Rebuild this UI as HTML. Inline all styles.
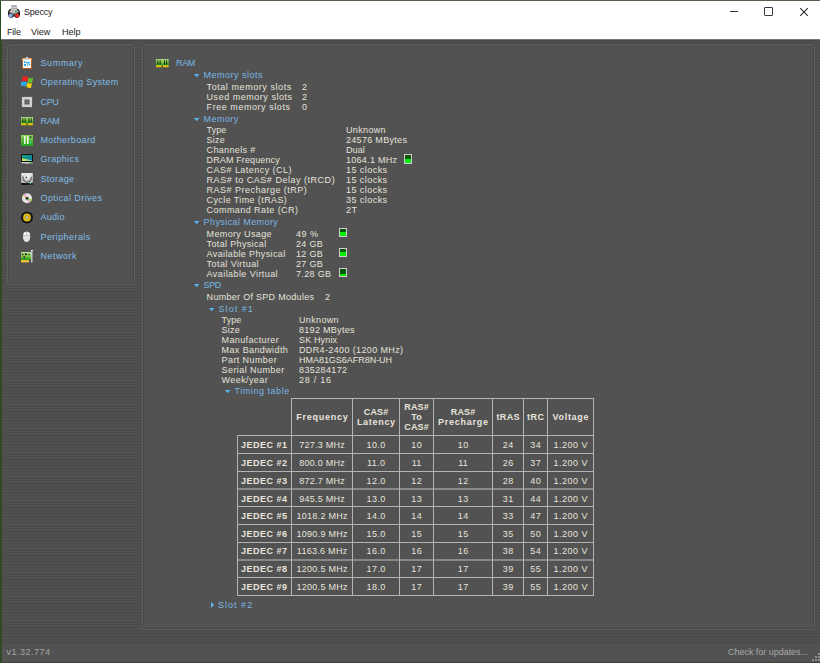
<!DOCTYPE html><html><head><meta charset="utf-8"><style>
html,body{margin:0;padding:0;}
body{width:820px;height:663px;overflow:hidden;position:relative;background:#2c4a1c;font-family:"Liberation Sans", sans-serif;font-size:9px;}
.t{position:absolute;white-space:nowrap;line-height:10px;transform-origin:0 0;}
.r{position:absolute;}
svg{position:absolute;overflow:visible;}
</style></head><body>
<div class="r" style="left:1px;top:1px;width:819px;height:661px;background:repeating-linear-gradient(to bottom,#4a4a48 0px,#4a4a48 1px,#4e4e4d 1px,#4e4e4d 2px,#525251 2px,#525251 3px);background-position:0 2px;"></div>
<div class="r" style="left:1px;top:1px;width:819px;height:38px;background:#ffffff;"></div>
<div class="r" style="left:0px;top:0px;width:820px;height:1px;background:#56604e;"></div>
<div class="r" style="left:1px;top:662px;width:819px;height:1px;background:#3c4432;"></div>
<div class="r" style="left:1px;top:39px;width:819px;height:1px;background:#747473;"></div>
<div class="r" style="left:1px;top:40px;width:819px;height:1px;background:#484846;"></div>
<div class="r" style="left:1px;top:41px;width:819px;height:3px;background:#4e4e4c;"></div>
<div class="r" style="left:1px;top:644px;width:819px;height:18px;background:#525252;"></div>
<div class="r" style="left:1px;top:40px;width:1px;height:622px;background:#3c4434;"></div>
<div class="r" style="left:818px;top:653px;width:2px;height:2px;background:#8c8c8c;"></div>
<div class="r" style="left:815px;top:656px;width:2px;height:2px;background:#8c8c8c;"></div>
<div class="r" style="left:818px;top:656px;width:2px;height:2px;background:#8c8c8c;"></div>
<div class="r" style="left:812px;top:659px;width:2px;height:2px;background:#8c8c8c;"></div>
<div class="r" style="left:815px;top:659px;width:2px;height:2px;background:#8c8c8c;"></div>
<div class="r" style="left:818px;top:659px;width:2px;height:2px;background:#8c8c8c;"></div>
<div class="r" style="left:7px;top:45px;width:128px;height:240px;box-sizing:border-box;border:1px solid #5e5e5d;border-radius:3px;"></div>
<div class="r" style="left:8px;top:46px;width:126px;height:238px;box-sizing:border-box;border:1px solid #484847;border-radius:2px;background:#525252;"></div>
<div class="r" style="left:142px;top:45px;width:673px;height:585px;box-sizing:border-box;border:1px solid #5e5e5d;border-radius:3px;"></div>
<div class="r" style="left:143px;top:46px;width:671px;height:583px;box-sizing:border-box;border:1px solid #484847;border-radius:2px;background:#525252;"></div>
<div class="t" style="left:24px;top:7.00px;color:#1a1a1a;letter-spacing:-0.200px;">Speccy</div>
<div class="t" style="left:7px;top:27.00px;color:#1a1a1a;letter-spacing:-0.200px;">File</div>
<div class="t" style="left:31px;top:27.00px;color:#1a1a1a;">View</div>
<div class="t" style="left:62px;top:27.00px;color:#1a1a1a;">Help</div>
<div class="r" style="left:730px;top:11px;width:8px;height:1px;background:#333333;"></div>
<div class="r" style="left:764px;top:7px;width:9px;height:9px;border:1px solid #3a3a3a;box-sizing:border-box;border-radius:1px;"></div>
<svg style="left:800px;top:7.5px" width="8" height="8" viewBox="0 0 8 8"><path d="M0.2 0.2L7.8 7.8M7.8 0.2L0.2 7.8" stroke="#2a2a2a" stroke-width="1.1"/></svg>
<div class="t" style="left:40.5px;top:58.00px;color:#80bde6;letter-spacing:0.565px;">Summary</div>
<div class="t" style="left:40.5px;top:77.00px;color:#80bde6;letter-spacing:0.373px;">Operating System</div>
<div class="t" style="left:40.5px;top:97.00px;color:#80bde6;letter-spacing:-0.370px;">CPU</div>
<div class="t" style="left:40.5px;top:116.00px;color:#80bde6;letter-spacing:-0.370px;">RAM</div>
<div class="t" style="left:40.5px;top:135.00px;color:#80bde6;letter-spacing:0.377px;">Motherboard</div>
<div class="t" style="left:40.5px;top:154.00px;color:#80bde6;letter-spacing:0.341px;">Graphics</div>
<div class="t" style="left:40.5px;top:174.00px;color:#80bde6;letter-spacing:0.347px;">Storage</div>
<div class="t" style="left:40.5px;top:193.00px;color:#80bde6;letter-spacing:0.417px;">Optical Drives</div>
<div class="t" style="left:40.5px;top:212.00px;color:#80bde6;letter-spacing:0.253px;">Audio</div>
<div class="t" style="left:40.5px;top:232.00px;color:#80bde6;letter-spacing:0.422px;">Peripherals</div>
<div class="t" style="left:40.5px;top:251.00px;color:#80bde6;letter-spacing:0.493px;">Network</div>
<div class="t" style="left:176px;top:58.00px;color:#78b6e4;letter-spacing:-0.370px;">RAM</div>
<svg style="left:194px;top:74px" width="6" height="4" viewBox="0 0 6 4"><path d="M0 0H5.4L2.7 3.3Z" fill="#5ab4ee"/></svg>
<div class="t" style="left:203.6px;top:70.00px;color:#78b6e4;letter-spacing:0.496px;">Memory slots</div>
<div class="t" style="left:206.6px;top:82.00px;color:#e6e2da;letter-spacing:0.565px;">Total memory slots</div>
<div class="t" style="left:302px;top:82.00px;color:#e6e2da;">2</div>
<div class="t" style="left:206.6px;top:92.00px;color:#e6e2da;letter-spacing:0.524px;">Used memory slots</div>
<div class="t" style="left:302px;top:92.00px;color:#e6e2da;">2</div>
<div class="t" style="left:206.6px;top:102.00px;color:#e6e2da;letter-spacing:0.552px;">Free memory slots</div>
<div class="t" style="left:302px;top:102.00px;color:#e6e2da;">0</div>
<svg style="left:194px;top:117.6px" width="6" height="4" viewBox="0 0 6 4"><path d="M0 0H5.4L2.7 3.3Z" fill="#5ab4ee"/></svg>
<div class="t" style="left:203.6px;top:114.00px;color:#78b6e4;letter-spacing:0.440px;">Memory</div>
<div class="t" style="left:206.6px;top:125.00px;color:#e6e2da;letter-spacing:0.083px;">Type</div>
<div class="t" style="left:346px;top:125.00px;color:#e6e2da;letter-spacing:0.343px;">Unknown</div>
<div class="t" style="left:206.6px;top:135.00px;color:#e6e2da;letter-spacing:0.233px;">Size</div>
<div class="t" style="left:346px;top:135.00px;color:#e6e2da;letter-spacing:0.305px;">24576 MBytes</div>
<div class="t" style="left:206.6px;top:145.00px;color:#e6e2da;letter-spacing:0.340px;">Channels #</div>
<div class="t" style="left:346px;top:145.00px;color:#e6e2da;letter-spacing:0.083px;">Dual</div>
<div class="t" style="left:206.6px;top:155.00px;color:#e6e2da;letter-spacing:0.122px;">DRAM Frequency</div>
<div class="t" style="left:346px;top:155.00px;color:#e6e2da;letter-spacing:0.274px;">1064.1 MHz</div>
<div class="t" style="left:206.6px;top:165.00px;color:#e6e2da;letter-spacing:0.456px;">CAS# Latency (CL)</div>
<div class="t" style="left:346px;top:165.00px;color:#e6e2da;letter-spacing:0.446px;">15 clocks</div>
<div class="t" style="left:206.6px;top:175.00px;color:#e6e2da;letter-spacing:0.521px;">RAS# to CAS# Delay (tRCD)</div>
<div class="t" style="left:346px;top:175.00px;color:#e6e2da;letter-spacing:0.446px;">15 clocks</div>
<div class="t" style="left:206.6px;top:185.00px;color:#e6e2da;letter-spacing:0.481px;">RAS# Precharge (tRP)</div>
<div class="t" style="left:346px;top:185.00px;color:#e6e2da;letter-spacing:0.446px;">15 clocks</div>
<div class="t" style="left:206.6px;top:195.00px;color:#e6e2da;letter-spacing:0.388px;">Cycle Time (tRAS)</div>
<div class="t" style="left:346px;top:195.00px;color:#e6e2da;letter-spacing:0.446px;">35 clocks</div>
<div class="t" style="left:206.6px;top:205.00px;color:#e6e2da;letter-spacing:0.429px;">Command Rate (CR)</div>
<div class="t" style="left:346px;top:205.00px;color:#e6e2da;letter-spacing:0.380px;">2T</div>
<svg style="left:194px;top:220.6px" width="6" height="4" viewBox="0 0 6 4"><path d="M0 0H5.4L2.7 3.3Z" fill="#5ab4ee"/></svg>
<div class="t" style="left:203.6px;top:217.00px;color:#78b6e4;letter-spacing:0.408px;">Physical Memory</div>
<div class="t" style="left:206.6px;top:229.00px;color:#e6e2da;letter-spacing:0.353px;">Memory Usage</div>
<div class="t" style="left:296px;top:229.00px;color:#e6e2da;letter-spacing:0.523px;">49 %</div>
<div class="t" style="left:206.6px;top:239.00px;color:#e6e2da;letter-spacing:0.348px;">Total Physical</div>
<div class="t" style="left:296px;top:239.00px;color:#e6e2da;letter-spacing:0.300px;">24 GB</div>
<div class="t" style="left:206.6px;top:249.00px;color:#e6e2da;letter-spacing:0.365px;">Available Physical</div>
<div class="t" style="left:296px;top:249.00px;color:#e6e2da;letter-spacing:0.300px;">12 GB</div>
<div class="t" style="left:206.6px;top:259.00px;color:#e6e2da;letter-spacing:0.426px;">Total Virtual</div>
<div class="t" style="left:296px;top:259.00px;color:#e6e2da;letter-spacing:0.300px;">27 GB</div>
<div class="t" style="left:206.6px;top:269.00px;color:#e6e2da;letter-spacing:0.425px;">Available Virtual</div>
<div class="t" style="left:296px;top:269.00px;color:#e6e2da;letter-spacing:0.347px;">7.28 GB</div>
<svg style="left:194px;top:283.6px" width="6" height="4" viewBox="0 0 6 4"><path d="M0 0H5.4L2.7 3.3Z" fill="#5ab4ee"/></svg>
<div class="t" style="left:203.6px;top:280.00px;color:#78b6e4;letter-spacing:-0.370px;">SPD</div>
<div class="t" style="left:206.6px;top:292.00px;color:#e6e2da;letter-spacing:0.292px;">Number Of SPD Modules</div>
<div class="t" style="left:325px;top:292.00px;color:#e6e2da;">2</div>
<svg style="left:209px;top:307.6px" width="6" height="4" viewBox="0 0 6 4"><path d="M0 0H5.4L2.7 3.3Z" fill="#5ab4ee"/></svg>
<div class="t" style="left:218.6px;top:304.00px;color:#78b6e4;letter-spacing:1.022px;">Slot #1</div>
<div class="t" style="left:221.6px;top:315.00px;color:#e6e2da;letter-spacing:0.083px;">Type</div>
<div class="t" style="left:299px;top:315.00px;color:#e6e2da;letter-spacing:0.343px;">Unknown</div>
<div class="t" style="left:221.6px;top:325.00px;color:#e6e2da;letter-spacing:0.233px;">Size</div>
<div class="t" style="left:299px;top:325.00px;color:#e6e2da;letter-spacing:0.297px;">8192 MBytes</div>
<div class="t" style="left:221.6px;top:335.00px;color:#e6e2da;letter-spacing:0.371px;">Manufacturer</div>
<div class="t" style="left:299px;top:335.00px;color:#e6e2da;letter-spacing:0.154px;">SK Hynix</div>
<div class="t" style="left:221.6px;top:345.00px;color:#e6e2da;letter-spacing:0.387px;">Max Bandwidth</div>
<div class="t" style="left:299px;top:345.00px;color:#e6e2da;letter-spacing:0.366px;">DDR4-2400 (1200 MHz)</div>
<div class="t" style="left:221.6px;top:355.00px;color:#e6e2da;letter-spacing:0.402px;">Part Number</div>
<div class="t" style="left:299px;top:355.00px;color:#e6e2da;letter-spacing:-0.030px;">HMA81GS6AFR8N-UH</div>
<div class="t" style="left:221.6px;top:365.00px;color:#e6e2da;letter-spacing:0.424px;">Serial Number</div>
<div class="t" style="left:299px;top:365.00px;color:#e6e2da;letter-spacing:0.380px;">835284172</div>
<div class="t" style="left:221.6px;top:375.00px;color:#e6e2da;letter-spacing:0.403px;">Week/year</div>
<div class="t" style="left:299px;top:375.00px;color:#e6e2da;letter-spacing:0.748px;">28 / 16</div>
<svg style="left:224.8px;top:390.2px" width="6" height="4" viewBox="0 0 6 4"><path d="M0 0H5.4L2.7 3.3Z" fill="#5ab4ee"/></svg>
<div class="t" style="left:234.6px;top:386.00px;color:#78b6e4;letter-spacing:0.537px;">Timing table</div>
<svg style="left:211px;top:601.5px" width="4" height="7" viewBox="0 0 4 7"><path d="M0 0V6L3 3Z" fill="#5ab4ee"/></svg>
<div class="t" style="left:218px;top:600.00px;color:#78b6e4;letter-spacing:1.022px;">Slot #2</div>
<div class="r" style="left:404px;top:154px;width:8px;height:10px;box-sizing:border-box;border:1px solid #d4cdd4;background:linear-gradient(to bottom,#005a00 0,#005a00 4px,#00f000 4px);"></div>
<div class="r" style="left:339px;top:228px;width:8px;height:9px;box-sizing:border-box;border:1px solid #d4cdd4;background:linear-gradient(to bottom,#005a00 0,#005a00 3px,#00f000 3px);"></div>
<div class="r" style="left:339px;top:248px;width:8px;height:9px;box-sizing:border-box;border:1px solid #d4cdd4;background:linear-gradient(to bottom,#005a00 0,#005a00 3px,#00f000 3px);"></div>
<div class="r" style="left:339px;top:268px;width:8px;height:9px;box-sizing:border-box;border:1px solid #d4cdd4;background:linear-gradient(to bottom,#005a00 0,#005a00 5px,#00f000 5px);"></div>
<div class="r" style="left:291px;top:398px;width:303px;height:1px;background:#b4b4b4;"></div>
<div class="r" style="left:291px;top:398px;width:1px;height:198px;background:#b4b4b4;"></div>
<div class="r" style="left:352px;top:398px;width:1px;height:198px;background:#b4b4b4;"></div>
<div class="r" style="left:399px;top:398px;width:1px;height:198px;background:#b4b4b4;"></div>
<div class="r" style="left:433px;top:398px;width:1px;height:198px;background:#b4b4b4;"></div>
<div class="r" style="left:492px;top:398px;width:1px;height:198px;background:#b4b4b4;"></div>
<div class="r" style="left:523px;top:398px;width:1px;height:198px;background:#b4b4b4;"></div>
<div class="r" style="left:547px;top:398px;width:1px;height:198px;background:#b4b4b4;"></div>
<div class="r" style="left:593px;top:398px;width:1px;height:198px;background:#b4b4b4;"></div>
<div class="r" style="left:237px;top:435px;width:1px;height:161px;background:#b4b4b4;"></div>
<div class="r" style="left:237px;top:435px;width:357px;height:1px;background:#b4b4b4;"></div>
<div class="r" style="left:237px;top:453px;width:357px;height:1px;background:#b4b4b4;"></div>
<div class="r" style="left:237px;top:471px;width:357px;height:1px;background:#b4b4b4;"></div>
<div class="r" style="left:237px;top:488px;width:357px;height:2px;background:rgba(180,180,180,0.55);"></div>
<div class="r" style="left:237px;top:506px;width:357px;height:1px;background:#b4b4b4;"></div>
<div class="r" style="left:237px;top:524px;width:357px;height:1px;background:#b4b4b4;"></div>
<div class="r" style="left:237px;top:542px;width:357px;height:1px;background:#b4b4b4;"></div>
<div class="r" style="left:237px;top:559px;width:357px;height:2px;background:rgba(180,180,180,0.55);"></div>
<div class="r" style="left:237px;top:577px;width:357px;height:1px;background:#b4b4b4;"></div>
<div class="r" style="left:237px;top:595px;width:357px;height:1px;background:#b4b4b4;"></div>
<div class="t" style="left:292px;width:60px;top:412px;color:#e8e4dc;text-align:center;letter-spacing:0.725px;text-indent:0.725px;font-weight:bold;">Frequency</div>
<div class="t" style="left:353px;width:46px;top:407px;color:#e8e4dc;text-align:center;letter-spacing:0.200px;text-indent:0.200px;font-weight:bold;">CAS#</div>
<div class="t" style="left:353px;width:46px;top:417px;color:#e8e4dc;text-align:center;letter-spacing:0.700px;text-indent:0.700px;font-weight:bold;">Latency</div>
<div class="t" style="left:400px;width:33px;top:402px;color:#e8e4dc;text-align:center;letter-spacing:0.200px;text-indent:0.200px;font-weight:bold;">RAS#</div>
<div class="t" style="left:400px;width:33px;top:412px;color:#e8e4dc;text-align:center;letter-spacing:0.200px;text-indent:0.200px;font-weight:bold;">To</div>
<div class="t" style="left:400px;width:33px;top:422px;color:#e8e4dc;text-align:center;letter-spacing:0.200px;text-indent:0.200px;font-weight:bold;">CAS#</div>
<div class="t" style="left:434px;width:58px;top:407px;color:#e8e4dc;text-align:center;letter-spacing:0.200px;text-indent:0.200px;font-weight:bold;">RAS#</div>
<div class="t" style="left:434px;width:58px;top:417px;color:#e8e4dc;text-align:center;letter-spacing:0.725px;text-indent:0.725px;font-weight:bold;">Precharge</div>
<div class="t" style="left:493px;width:30px;top:412px;color:#e8e4dc;text-align:center;letter-spacing:0.400px;text-indent:0.400px;font-weight:bold;">tRAS</div>
<div class="t" style="left:524px;width:23px;top:412px;color:#e8e4dc;text-align:center;letter-spacing:0.500px;text-indent:0.500px;font-weight:bold;">tRC</div>
<div class="t" style="left:548px;width:45px;top:412px;color:#e8e4dc;text-align:center;letter-spacing:0.700px;text-indent:0.700px;font-weight:bold;">Voltage</div>
<div class="t" style="left:241px;top:440.00px;color:#e8e4dc;font-weight:bold;letter-spacing:0.493px;">JEDEC #1</div>
<div class="t" style="left:292px;width:60px;top:440px;color:#e8e4dc;text-align:center;letter-spacing:0.261px;text-indent:0.261px;">727.3 MHz</div>
<div class="t" style="left:353px;width:46px;top:440px;color:#e8e4dc;text-align:center;letter-spacing:0.420px;text-indent:0.420px;">10.0</div>
<div class="t" style="left:400px;width:33px;top:440px;color:#e8e4dc;text-align:center;letter-spacing:0.380px;text-indent:0.380px;">10</div>
<div class="t" style="left:434px;width:58px;top:440px;color:#e8e4dc;text-align:center;letter-spacing:0.380px;text-indent:0.380px;">10</div>
<div class="t" style="left:493px;width:30px;top:440px;color:#e8e4dc;text-align:center;letter-spacing:0.380px;text-indent:0.380px;">24</div>
<div class="t" style="left:524px;width:23px;top:440px;color:#e8e4dc;text-align:center;letter-spacing:0.380px;text-indent:0.380px;">34</div>
<div class="t" style="left:548px;width:45px;top:440px;color:#e8e4dc;text-align:center;letter-spacing:0.472px;text-indent:0.472px;">1.200 V</div>
<div class="t" style="left:241px;top:458.00px;color:#e8e4dc;font-weight:bold;letter-spacing:0.493px;">JEDEC #2</div>
<div class="t" style="left:292px;width:60px;top:458px;color:#e8e4dc;text-align:center;letter-spacing:0.261px;text-indent:0.261px;">800.0 MHz</div>
<div class="t" style="left:353px;width:46px;top:458px;color:#e8e4dc;text-align:center;letter-spacing:0.420px;text-indent:0.420px;">11.0</div>
<div class="t" style="left:400px;width:33px;top:458px;color:#e8e4dc;text-align:center;letter-spacing:0.380px;text-indent:0.380px;">11</div>
<div class="t" style="left:434px;width:58px;top:458px;color:#e8e4dc;text-align:center;letter-spacing:0.380px;text-indent:0.380px;">11</div>
<div class="t" style="left:493px;width:30px;top:458px;color:#e8e4dc;text-align:center;letter-spacing:0.380px;text-indent:0.380px;">26</div>
<div class="t" style="left:524px;width:23px;top:458px;color:#e8e4dc;text-align:center;letter-spacing:0.380px;text-indent:0.380px;">37</div>
<div class="t" style="left:548px;width:45px;top:458px;color:#e8e4dc;text-align:center;letter-spacing:0.472px;text-indent:0.472px;">1.200 V</div>
<div class="t" style="left:241px;top:476.00px;color:#e8e4dc;font-weight:bold;letter-spacing:0.493px;">JEDEC #3</div>
<div class="t" style="left:292px;width:60px;top:476px;color:#e8e4dc;text-align:center;letter-spacing:0.261px;text-indent:0.261px;">872.7 MHz</div>
<div class="t" style="left:353px;width:46px;top:476px;color:#e8e4dc;text-align:center;letter-spacing:0.420px;text-indent:0.420px;">12.0</div>
<div class="t" style="left:400px;width:33px;top:476px;color:#e8e4dc;text-align:center;letter-spacing:0.380px;text-indent:0.380px;">12</div>
<div class="t" style="left:434px;width:58px;top:476px;color:#e8e4dc;text-align:center;letter-spacing:0.380px;text-indent:0.380px;">12</div>
<div class="t" style="left:493px;width:30px;top:476px;color:#e8e4dc;text-align:center;letter-spacing:0.380px;text-indent:0.380px;">28</div>
<div class="t" style="left:524px;width:23px;top:476px;color:#e8e4dc;text-align:center;letter-spacing:0.380px;text-indent:0.380px;">40</div>
<div class="t" style="left:548px;width:45px;top:476px;color:#e8e4dc;text-align:center;letter-spacing:0.472px;text-indent:0.472px;">1.200 V</div>
<div class="t" style="left:241px;top:494.00px;color:#e8e4dc;font-weight:bold;letter-spacing:0.493px;">JEDEC #4</div>
<div class="t" style="left:292px;width:60px;top:494px;color:#e8e4dc;text-align:center;letter-spacing:0.261px;text-indent:0.261px;">945.5 MHz</div>
<div class="t" style="left:353px;width:46px;top:494px;color:#e8e4dc;text-align:center;letter-spacing:0.420px;text-indent:0.420px;">13.0</div>
<div class="t" style="left:400px;width:33px;top:494px;color:#e8e4dc;text-align:center;letter-spacing:0.380px;text-indent:0.380px;">13</div>
<div class="t" style="left:434px;width:58px;top:494px;color:#e8e4dc;text-align:center;letter-spacing:0.380px;text-indent:0.380px;">13</div>
<div class="t" style="left:493px;width:30px;top:494px;color:#e8e4dc;text-align:center;letter-spacing:0.380px;text-indent:0.380px;">31</div>
<div class="t" style="left:524px;width:23px;top:494px;color:#e8e4dc;text-align:center;letter-spacing:0.380px;text-indent:0.380px;">44</div>
<div class="t" style="left:548px;width:45px;top:494px;color:#e8e4dc;text-align:center;letter-spacing:0.472px;text-indent:0.472px;">1.200 V</div>
<div class="t" style="left:241px;top:511.00px;color:#e8e4dc;font-weight:bold;letter-spacing:0.493px;">JEDEC #5</div>
<div class="t" style="left:292px;width:60px;top:511px;color:#e8e4dc;text-align:center;letter-spacing:0.274px;text-indent:0.274px;">1018.2 MHz</div>
<div class="t" style="left:353px;width:46px;top:511px;color:#e8e4dc;text-align:center;letter-spacing:0.420px;text-indent:0.420px;">14.0</div>
<div class="t" style="left:400px;width:33px;top:511px;color:#e8e4dc;text-align:center;letter-spacing:0.380px;text-indent:0.380px;">14</div>
<div class="t" style="left:434px;width:58px;top:511px;color:#e8e4dc;text-align:center;letter-spacing:0.380px;text-indent:0.380px;">14</div>
<div class="t" style="left:493px;width:30px;top:511px;color:#e8e4dc;text-align:center;letter-spacing:0.380px;text-indent:0.380px;">33</div>
<div class="t" style="left:524px;width:23px;top:511px;color:#e8e4dc;text-align:center;letter-spacing:0.380px;text-indent:0.380px;">47</div>
<div class="t" style="left:548px;width:45px;top:511px;color:#e8e4dc;text-align:center;letter-spacing:0.472px;text-indent:0.472px;">1.200 V</div>
<div class="t" style="left:241px;top:529.00px;color:#e8e4dc;font-weight:bold;letter-spacing:0.493px;">JEDEC #6</div>
<div class="t" style="left:292px;width:60px;top:529px;color:#e8e4dc;text-align:center;letter-spacing:0.274px;text-indent:0.274px;">1090.9 MHz</div>
<div class="t" style="left:353px;width:46px;top:529px;color:#e8e4dc;text-align:center;letter-spacing:0.420px;text-indent:0.420px;">15.0</div>
<div class="t" style="left:400px;width:33px;top:529px;color:#e8e4dc;text-align:center;letter-spacing:0.380px;text-indent:0.380px;">15</div>
<div class="t" style="left:434px;width:58px;top:529px;color:#e8e4dc;text-align:center;letter-spacing:0.380px;text-indent:0.380px;">15</div>
<div class="t" style="left:493px;width:30px;top:529px;color:#e8e4dc;text-align:center;letter-spacing:0.380px;text-indent:0.380px;">35</div>
<div class="t" style="left:524px;width:23px;top:529px;color:#e8e4dc;text-align:center;letter-spacing:0.380px;text-indent:0.380px;">50</div>
<div class="t" style="left:548px;width:45px;top:529px;color:#e8e4dc;text-align:center;letter-spacing:0.472px;text-indent:0.472px;">1.200 V</div>
<div class="t" style="left:241px;top:546.00px;color:#e8e4dc;font-weight:bold;letter-spacing:0.493px;">JEDEC #7</div>
<div class="t" style="left:292px;width:60px;top:546px;color:#e8e4dc;text-align:center;letter-spacing:0.274px;text-indent:0.274px;">1163.6 MHz</div>
<div class="t" style="left:353px;width:46px;top:546px;color:#e8e4dc;text-align:center;letter-spacing:0.420px;text-indent:0.420px;">16.0</div>
<div class="t" style="left:400px;width:33px;top:546px;color:#e8e4dc;text-align:center;letter-spacing:0.380px;text-indent:0.380px;">16</div>
<div class="t" style="left:434px;width:58px;top:546px;color:#e8e4dc;text-align:center;letter-spacing:0.380px;text-indent:0.380px;">16</div>
<div class="t" style="left:493px;width:30px;top:546px;color:#e8e4dc;text-align:center;letter-spacing:0.380px;text-indent:0.380px;">38</div>
<div class="t" style="left:524px;width:23px;top:546px;color:#e8e4dc;text-align:center;letter-spacing:0.380px;text-indent:0.380px;">54</div>
<div class="t" style="left:548px;width:45px;top:546px;color:#e8e4dc;text-align:center;letter-spacing:0.472px;text-indent:0.472px;">1.200 V</div>
<div class="t" style="left:241px;top:564.00px;color:#e8e4dc;font-weight:bold;letter-spacing:0.493px;">JEDEC #8</div>
<div class="t" style="left:292px;width:60px;top:564px;color:#e8e4dc;text-align:center;letter-spacing:0.274px;text-indent:0.274px;">1200.5 MHz</div>
<div class="t" style="left:353px;width:46px;top:564px;color:#e8e4dc;text-align:center;letter-spacing:0.420px;text-indent:0.420px;">17.0</div>
<div class="t" style="left:400px;width:33px;top:564px;color:#e8e4dc;text-align:center;letter-spacing:0.380px;text-indent:0.380px;">17</div>
<div class="t" style="left:434px;width:58px;top:564px;color:#e8e4dc;text-align:center;letter-spacing:0.380px;text-indent:0.380px;">17</div>
<div class="t" style="left:493px;width:30px;top:564px;color:#e8e4dc;text-align:center;letter-spacing:0.380px;text-indent:0.380px;">39</div>
<div class="t" style="left:524px;width:23px;top:564px;color:#e8e4dc;text-align:center;letter-spacing:0.380px;text-indent:0.380px;">55</div>
<div class="t" style="left:548px;width:45px;top:564px;color:#e8e4dc;text-align:center;letter-spacing:0.472px;text-indent:0.472px;">1.200 V</div>
<div class="t" style="left:241px;top:582.00px;color:#e8e4dc;font-weight:bold;letter-spacing:0.493px;">JEDEC #9</div>
<div class="t" style="left:292px;width:60px;top:582px;color:#e8e4dc;text-align:center;letter-spacing:0.274px;text-indent:0.274px;">1200.5 MHz</div>
<div class="t" style="left:353px;width:46px;top:582px;color:#e8e4dc;text-align:center;letter-spacing:0.420px;text-indent:0.420px;">18.0</div>
<div class="t" style="left:400px;width:33px;top:582px;color:#e8e4dc;text-align:center;letter-spacing:0.380px;text-indent:0.380px;">17</div>
<div class="t" style="left:434px;width:58px;top:582px;color:#e8e4dc;text-align:center;letter-spacing:0.380px;text-indent:0.380px;">17</div>
<div class="t" style="left:493px;width:30px;top:582px;color:#e8e4dc;text-align:center;letter-spacing:0.380px;text-indent:0.380px;">39</div>
<div class="t" style="left:524px;width:23px;top:582px;color:#e8e4dc;text-align:center;letter-spacing:0.380px;text-indent:0.380px;">55</div>
<div class="t" style="left:548px;width:45px;top:582px;color:#e8e4dc;text-align:center;letter-spacing:0.472px;text-indent:0.472px;">1.200 V</div>
<div class="t" style="left:6.5px;top:647.00px;color:#a2a2a2;letter-spacing:0.496px;">v1.32.774</div>
<div class="t" style="left:728px;top:647.00px;color:#a8a8a8;letter-spacing:-0.028px;">Check for updates...</div>
<svg style="left:0;top:0" width="820" height="663" viewBox="0 0 820 663">
<defs>
<linearGradient id="ramg" x1="0" y1="0" x2="0" y2="1"><stop offset="0" stop-color="#b8dc98"/><stop offset="0.45" stop-color="#7ccc3c"/><stop offset="1" stop-color="#1c9a2a"/></linearGradient>
<linearGradient id="ramy" x1="0" y1="0" x2="0" y2="1"><stop offset="0" stop-color="#ffee10"/><stop offset="1" stop-color="#e0a000"/></linearGradient>
<linearGradient id="mbg" x1="0" y1="0" x2="0" y2="1"><stop offset="0" stop-color="#90d850"/><stop offset="1" stop-color="#20a020"/></linearGradient>
<linearGradient id="scr" x1="0" y1="0" x2="1" y2="1"><stop offset="0" stop-color="#18a070"/><stop offset="0.45" stop-color="#0a9090"/><stop offset="1" stop-color="#2080a0"/></linearGradient>
<linearGradient id="scry" x1="0" y1="0" x2="1" y2="0"><stop offset="0" stop-color="#f0f030"/><stop offset="1" stop-color="#60d0d0"/></linearGradient>
<linearGradient id="netg" x1="0" y1="0" x2="0" y2="1"><stop offset="0" stop-color="#c0e8a0"/><stop offset="0.6" stop-color="#70c838"/><stop offset="1" stop-color="#1a9020"/></linearGradient>
<radialGradient id="cdg" cx="0.5" cy="0.5" r="0.5"><stop offset="0.25" stop-color="#333"/><stop offset="0.3" stop-color="#bbb"/><stop offset="1" stop-color="#e8e8e8"/></radialGradient>
<linearGradient id="hdd" x1="0" y1="0" x2="0" y2="1"><stop offset="0" stop-color="#e8e8e8"/><stop offset="1" stop-color="#b8b8b8"/></linearGradient>
</defs>
<rect x="22" y="58" width="10" height="11" rx="0.8" fill="#b85a24"/>
<rect x="22" y="58" width="10" height="2" fill="#e88838"/>
<rect x="23" y="59" width="8" height="9" fill="#f4f8fa"/>
<rect x="24" y="61" width="1.5" height="2" fill="#30a8e8"/><rect x="26" y="62" width="4" height="1.4" fill="#30a8e8"/>
<rect x="24" y="64" width="2" height="2" fill="#30a8e8"/><rect x="27" y="64" width="1" height="2" fill="#50b8f0"/><rect x="29" y="64" width="1.3" height="1.3" fill="#30a8e8"/>
<path d="M25 59.8H29L28.4 57.6Q27 56 25.6 57.6Z" fill="#c8c8c8"/>
<path d="M22.5 76.8Q25 75.6 28.2 77.2L27.2 81.6Q24.4 80.2 21.6 81.2Z" fill="#f02020"/>
<path d="M28.6 77.4Q30.8 78.6 33.2 78L32.2 82.6Q29.8 83.2 27.6 82Z" fill="#60c030"/>
<path d="M21.4 81.8Q24.2 80.8 27 82.2L26 86.6Q23.4 85.2 20.6 86.2Z" fill="#30a8e8"/>
<path d="M27.4 82.6Q29.6 83.8 32 83.2L31 87.8Q28.6 88.2 26.4 87Z" fill="#f8d010"/>
<rect x="22" y="97" width="10" height="10" fill="#d4d4d4"/>
<rect x="22" y="97" width="10" height="10" fill="none" stroke="#b0b0b0" stroke-width="0.6" stroke-dasharray="1 1"/>
<rect x="24.5" y="99.5" width="5" height="5" fill="#5a5a5a"/>
<path d="M27 99.5V104.5M24.5 102H29.5" stroke="#808080" stroke-width="0.5"/>
<rect x="21" y="117" width="12" height="6.6" fill="url(#ramg)"/>
<path d="M22.3 122.4L22.6 117.8H23.2L23.5 122.4Z" fill="#141414"/>
<path d="M24.5 122.4L24.8 117.8H25.4L25.7 122.4Z" fill="#141414"/>
<path d="M28.3 122.4L28.6 117.8H29.2L29.5 122.4Z" fill="#141414"/>
<path d="M30.5 122.4L30.8 117.8H31.4L31.7 122.4Z" fill="#141414"/>
<rect x="21" y="123.4" width="12" height="1.9" fill="url(#ramy)"/>
<rect x="26.3" y="123.4" width="1.4" height="1.9" fill="#404a20"/>
<rect x="156" y="59" width="12.6" height="6.6" fill="url(#ramg)"/>
<path d="M157.3 64.4L157.6 59.8H158.2L158.5 64.4Z" fill="#141414"/>
<path d="M159.5 64.4L159.8 59.8H160.4L160.7 64.4Z" fill="#141414"/>
<path d="M163.9 64.4L164.2 59.8H164.8L165.1 64.4Z" fill="#141414"/>
<path d="M166.1 64.4L166.4 59.8H167.0L167.3 64.4Z" fill="#141414"/>
<rect x="156" y="65.4" width="12.6" height="1.9" fill="url(#ramy)"/>
<rect x="161.6" y="65.4" width="1.4" height="1.9" fill="#404a20"/>
<rect x="21" y="135" width="12" height="11" fill="url(#mbg)"/>
<rect x="24" y="136" width="1.6" height="8" fill="#e8f4d8"/><rect x="27" y="136" width="1.6" height="8" fill="#e8f4d8"/>
<rect x="29.5" y="136.2" width="2" height="1.6" fill="#404040"/><circle cx="30.5" cy="142.3" r="0.9" fill="#30d0a0"/>
<rect x="22.6" y="138.6" width="0.8" height="1.4" fill="#707070"/>
<rect x="21" y="154" width="12" height="8" fill="#101010"/>
<rect x="22" y="155" width="10" height="6" fill="url(#scr)"/>
<path d="M22 158.5Q26 158.6 32 160.5V161H22Z" fill="url(#scry)" opacity="0.95"/>
<rect x="21.5" y="162" width="11" height="1.4" fill="#c8c8c8"/><rect x="30.4" y="162" width="1.6" height="1.2" fill="#30c030"/>
<rect x="25.5" y="163.2" width="3" height="1.8" fill="#b0b0b0"/><rect x="23.5" y="164.4" width="7" height="1" fill="#3a3a3a"/>
<rect x="21.2" y="173" width="11.6" height="10" rx="0.8" fill="url(#hdd)"/>
<path d="M23.2 176.4A4.2 4.2 0 1 0 31.2 176.8" fill="none" stroke="#6a6a6a" stroke-width="1.3"/>
<circle cx="26.6" cy="177.3" r="2.1" fill="#fafafa"/><circle cx="26.3" cy="177.6" r="1" fill="#505050"/>
<path d="M28.6 174.6L30.2 177.2H27.4Z" fill="#f4f4f4"/>
<rect x="21.2" y="183" width="11.6" height="2" fill="#181818"/><rect x="29.6" y="183" width="1.4" height="1.4" fill="#20c0b0"/>
<circle cx="27" cy="198.2" r="5" fill="#e4e4e4"/>
<path d="M27 198.2L23 194.8A5 5 0 0 1 25.6 193.4Z" fill="#f0a0d8"/>
<path d="M27 198.2L22.4 196.4A5 5 0 0 1 23.2 195Z" fill="#f0e070"/>
<path d="M27 198.2L31.9 199.2A5 5 0 0 1 30.4 201.8Z" fill="#90e040"/>
<path d="M27 198.2L30.2 202A5 5 0 0 1 28.2 203Z" fill="#f0a0d0"/>
<circle cx="27" cy="198.2" r="1.5" fill="#303030"/>
<circle cx="27" cy="217.5" r="6" fill="#121212"/>
<circle cx="27" cy="217.5" r="3.9" fill="#e4c418"/>
<circle cx="27" cy="217.5" r="2.3" fill="#b89410"/>
<circle cx="27" cy="217.5" r="1.2" fill="#c4c4cc"/>
<ellipse cx="26.6" cy="236.7" rx="3.7" ry="5.2" fill="#e4e4e4"/>
<path d="M22.9 235.6H30.3" stroke="#b0b0b0" stroke-width="0.6"/><path d="M26.6 231.5V235.6" stroke="#b8b8b8" stroke-width="0.6"/>
<ellipse cx="24.8" cy="233.6" rx="1.2" ry="1.4" fill="#fafafa"/><ellipse cx="28.4" cy="233.6" rx="1.2" ry="1.4" fill="#fafafa"/>
<rect x="21" y="252" width="10" height="8" fill="url(#netg)"/>
<circle cx="22.6" cy="254.4" r="0.9" fill="#303030"/><circle cx="25.9" cy="254.2" r="1.1" fill="#303030"/><circle cx="29" cy="254.6" r="0.8" fill="#404040"/><circle cx="24.3" cy="257.2" r="1" fill="#303030"/>
<rect x="21" y="260" width="8" height="2.4" fill="#e8c030"/>
<rect x="31" y="250.5" width="1.5" height="12" fill="#c8c8c8"/><rect x="30.8" y="250" width="2.4" height="1" fill="#e0e0e0"/>
<path d="M9.6 9.2Q8 10 7.9 13.5Q7.8 17 10.5 18Q12.6 18.2 13.6 16.6H14.4Q15.4 18.2 17.5 18Q20.2 17 20.1 13.5Q20 10 18.4 9.2L17 8.8V12.4H11V8.8Z" fill="#141414"/>
<path d="M9.4 12.6Q9.6 10.4 10.8 10V12.6Z" fill="#ffffff"/><path d="M18.6 12.6Q18.4 10.4 17.2 10V12.6Z" fill="#ffffff"/>
<rect x="11" y="5" width="6" height="9" rx="1.4" fill="#a8a8a8"/>
<path d="M11.2 7.3H16.8M11.2 9.6H16.8M11.2 11.8H16.8" stroke="#e8e8e8" stroke-width="0.8"/>
<rect x="12" y="13.6" width="4" height="2" fill="#505050"/>
<circle cx="10.5" cy="15.6" r="2.1" fill="#8ea8dc"/><circle cx="17.2" cy="15.6" r="2.1" fill="#f02828"/>
<rect x="15.2" y="10.6" width="1.6" height="1.5" fill="#28a028"/>
</svg>
</body></html>
